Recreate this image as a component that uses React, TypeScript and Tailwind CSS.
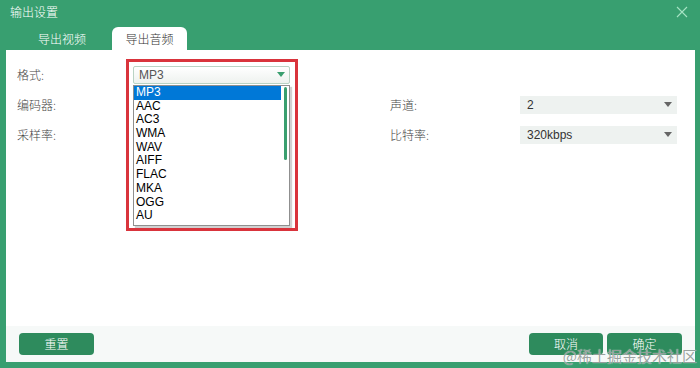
import React from 'react';

const cjk = { fontFamily: '"Microsoft YaHei", "Noto Sans CJK SC", "Noto Sans", sans-serif' };
const latin = { fontFamily: '"Liberation Sans", "Noto Sans CJK SC", sans-serif' };

const formats = ['MP3', 'AAC', 'AC3', 'WMA', 'WAV', 'AIFF', 'FLAC', 'MKA', 'OGG', 'AU'];

const Arrow: React.FC<{ color: string }> = ({ color }) => (
  <svg width="8" height="6" viewBox="0 0 8 6">
    <path d="M0 0 L8 0 L4 5 Z" fill={color} />
  </svg>
);

const GreySelect: React.FC<{ value: string }> = ({ value }) => (
  <div className="h-[18px] w-[157px] bg-[#eef2f0] flex items-center justify-between pl-[7px] pr-[5px] text-[12px] text-[#333]" style={latin}>
    <span>{value}</span>
    <Arrow color="#666" />
  </div>
);

export default function App() {
  return (
    <div className="relative w-[700px] h-[368px] bg-[#389f70] flex flex-col overflow-hidden select-none" style={cjk}>
      {/* title bar */}
      <div className="h-[27px] flex items-start justify-between pl-[10px] pr-[12px] pt-[4px]">
        <span className="text-[12px] text-white leading-[16px] font-light">输出设置</span>
        <svg width="12" height="12" viewBox="0 0 12 12" className="mt-[2px]">
          <path d="M1 1 L11 11 M11 1 L1 11" stroke="#a7e3c4" strokeWidth="1.1" />
        </svg>
      </div>

      {/* tabs */}
      <div className="h-[23px] flex items-end pl-[25px]">
        <div className="w-[74px] h-[23px] flex items-center justify-center text-[12px] text-white font-light">导出视频</div>
        <div className="ml-[13px] w-[75px] h-[23px] bg-white rounded-t-[6px] flex items-center justify-center text-[12px] text-[#333] font-light">导出音频</div>
      </div>

      {/* panel */}
      <div className="flex-1 ml-[6px] mr-[5px] mb-[6px] bg-white flex flex-col">
        <div className="relative flex-1 pt-[16px] pl-[11px]">
          <div className="grid grid-cols-[116px_157px_100px_130px_157px] auto-rows-[18px] gap-y-[12px] text-[12px] text-[#444] font-light">
            <div className="flex items-center">格式:</div>
            <div className="h-[18px] border border-[#b9d3c4] rounded-[2px] bg-gradient-to-b from-white to-[#eef2ef] flex items-center justify-between pl-[5px] pr-[4px] font-normal" style={latin}>
              <span className="text-[#555]">MP3</span>
              <Arrow color="#3a9f6f" />
            </div>
            <div />
            <div />
            <div />

            <div className="flex items-center">编码器:</div>
            <div />
            <div />
            <div className="flex items-center">声道:</div>
            <GreySelect value="2" />

            <div className="flex items-center">采样率:</div>
            <div />
            <div />
            <div className="flex items-center">比特率:</div>
            <GreySelect value="320kbps" />
          </div>

          {/* open dropdown list */}
          <div className="absolute left-[127px] top-[35px] w-[157px] h-[141px] bg-white border border-[#8f8f8f] shadow-[2px_2px_1px_rgba(0,0,0,0.18)] text-[12px] text-black" style={latin}>
            {formats.map((f, i) => (
              <div key={f} className={`h-[13.7px] leading-[13.7px] pl-[2px] ${i === 0 ? 'bg-[#0078d7] text-white mr-[8px]' : ''}`}>
                {f}
              </div>
            ))}
            <div className="absolute right-[2px] top-[1px] w-[3px] h-[73px] rounded-full bg-[#3a9f6f]" />
          </div>

          {/* red annotation */}
          <div className="absolute left-[120px] top-[9px] w-[172px] h-[172px] border-[3px] border-[#d9343c]" />
        </div>

        {/* footer */}
        <div className="h-[36px] bg-[#f6f9f8] flex items-center justify-between pl-[13px] pr-[13px]">
          <button className="w-[75px] h-[22px] rounded-[4px] bg-[#2e8b5d] text-white text-[12px] font-light">重置</button>
          <div className="flex gap-[4px]">
            <button className="w-[74px] h-[22px] rounded-[4px] bg-[#2e8b5d] text-white text-[12px] font-light">取消</button>
            <button className="w-[75px] h-[22px] rounded-[4px] bg-[#2e8b5d] text-white text-[12px] font-light">确定</button>
          </div>
        </div>
      </div>

      {/* watermark */}
      <div className="absolute right-[3px] bottom-[2px] text-[15px] leading-[20px] text-[#7f8a86]/80 [text-shadow:0_0_1px_#fff]" style={cjk}>
        @稀土掘金技术社区
      </div>
    </div>
  );
}
